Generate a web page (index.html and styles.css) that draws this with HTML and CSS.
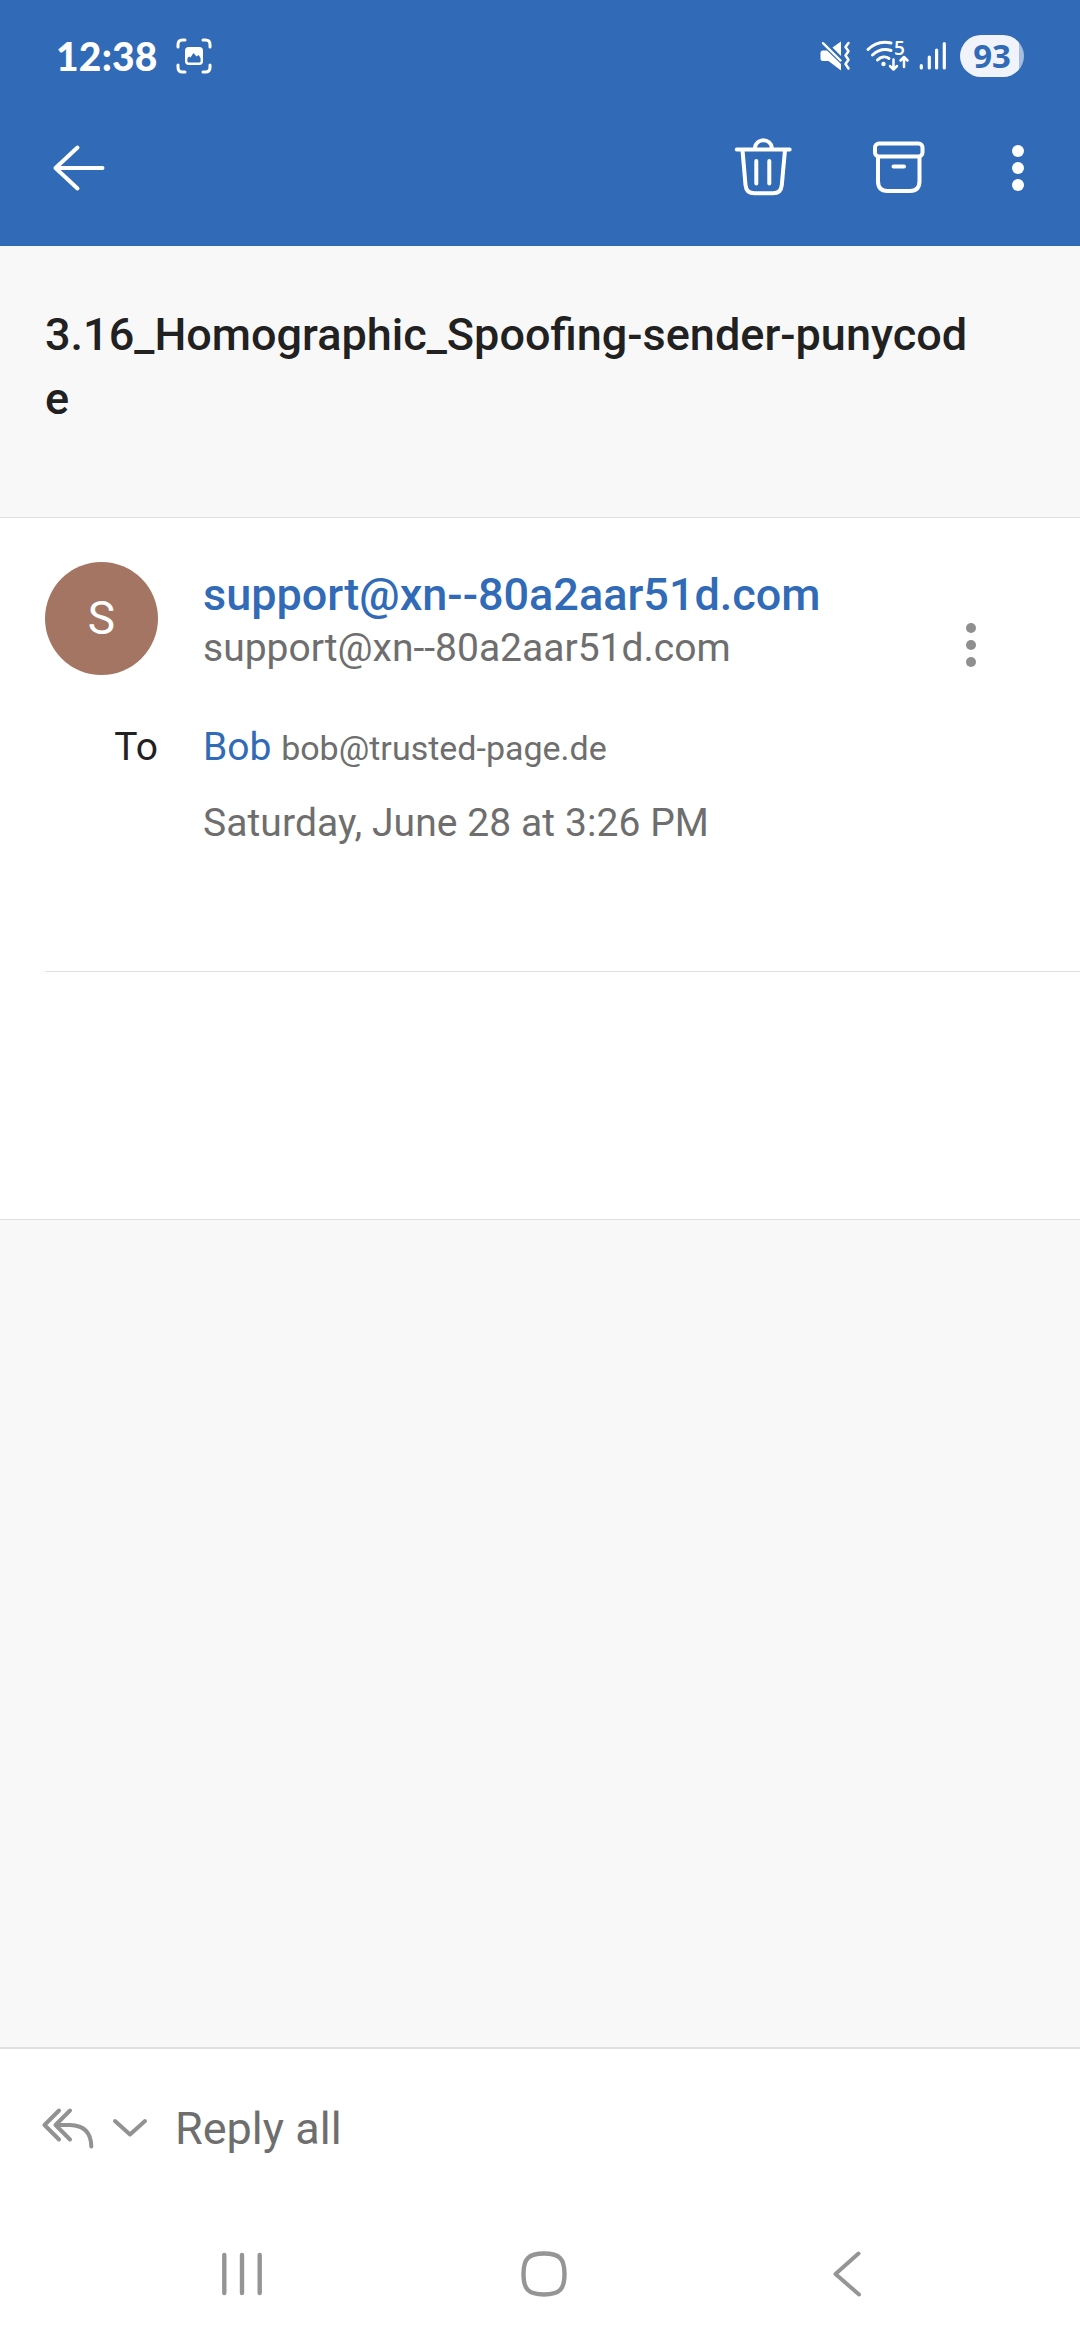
FILE: index.html
```html
<!DOCTYPE html>
<html lang="en">
<head>
<meta charset="utf-8">
<title>Message</title>
<link rel="stylesheet" href="styles.css">
</head>
<body>
<div class="screen">
  <header class="top">
    <div class="status">
      <span class="clock">12:38</span>
      <svg class="shot" width="36" height="36" viewBox="0 0 36 36" fill="none" stroke="#fff" stroke-width="3" stroke-linecap="round">
        <path d="M2 9V6.500Q2 2 6.500 2H9M27 2h2.500Q34 2 34 6.500V9M34 27v2.500Q34 34 29.500 34H27M9 34H6.500Q2 34 2 29.500V27"/>
        <rect x="10.200" y="10.200" width="15.600" height="15.600" rx="2.500" stroke-width="2.400"/>
        <path d="M11 10.500h14v10l-2.500-3.500-2 1.500-3-3.500-3 4.500-1.500-1-2 2z" fill="#fff" stroke="none"/>
      </svg>
      <span class="fill"></span>
      <svg class="mute" width="31" height="31" viewBox="0 0 31 31" fill="#fff">
        <path d="M3 9.500h4L21 23v6.500L8.500 20H3Q.500 20 .500 17.500V12Q.500 9.500 3 9.500zM12.500 6.500L21 .500V15z"/>
        <path d="M3 2.200L20.500 19.500" stroke="#fff" stroke-width="2.400" stroke-linecap="round"/>
        <path d="M28.500 2l-3 4 3 4.200-3 4.300 3 4.200-3 4.300 3 4.500" fill="none" stroke="#fff" stroke-width="2.500" stroke-linecap="round" stroke-linejoin="round"/>
      </svg>
      <svg class="wifi" width="44" height="32" viewBox="0 0 44 32" fill="none" stroke="#fff" stroke-width="3" stroke-linecap="round">
        <path d="M2 9.500C8 3.500 16 .800 25 3M6.500 15C12 10 18.500 8.300 25 10.500M11.500 20C15 16.500 19.500 16 23 18.500"/>
        <circle cx="17.500" cy="24" r="2.200" fill="#fff" stroke="none"/>
        <path d="M27.500 19.500v9.500M24 26l3.500 3.500L31 26M38 27v-9M34.500 20.500L38 17l3.500 3.500" stroke-width="2.500" stroke-linejoin="round"/>
        <text class="five" x="28" y="14.500">5</text>
      </svg>
      <svg class="bars" width="28" height="30" viewBox="0 0 28 30" stroke="#fff" stroke-width="3.200" stroke-linecap="round">
        <path d="M2.300 24.500V27M10.300 16v11M17.600 9v18M25.300 2.600V27"/>
      </svg>
      <span class="battery">93</span>
    </div>
    <div class="actions">
      <svg width="54" height="54" viewBox="0 0 54 54" fill="none" stroke="#fff" stroke-width="4" stroke-linecap="round" stroke-linejoin="round">
        <path d="M4.500 27H51.500M26.500 6.500L4.500 27 26.500 47.500"/>
      </svg>
      <span class="fill"></span>
      <svg class="trash" width="58" height="60" viewBox="0 0 58 60" fill="none" stroke="#fff" stroke-width="4" stroke-linecap="round">
        <path d="M2.700 13.500h53M21 13v-1.500a8.500 8.500 0 0 1 16.800 0V13M8.500 14l3 35Q12.300 57.300 20.500 57.300H39Q47 57.300 47.800 49L51 14M22.300 25v22.500M35.300 25v22.500"/>
      </svg>
      <svg class="archive" width="54" height="54" viewBox="0 0 54 54" fill="none" stroke="#fff" stroke-width="4" stroke-linecap="round">
        <rect x="3" y="3.500" width="47.500" height="13" rx="4"/>
        <path d="M6 17v24q0 10 9.500 10H38q9.500 0 9.500-10V17M21.500 26.500h10.500"/>
      </svg>
      <svg class="more" width="14" height="48" viewBox="0 0 14 48" fill="#fff">
        <circle cx="7" cy="7" r="6"/><circle cx="7" cy="24" r="6"/><circle cx="7" cy="41" r="6"/>
      </svg>
    </div>
  </header>

  <h1 class="subject">3.16_Homographic_Spoofing-sender-punycode</h1>

  <main class="message">
    <div class="avatar">S</div>
    <div class="sender">
      <div class="name">support@xn--80a2aar51d.com</div>
      <div class="address">support@xn--80a2aar51d.com</div>
    </div>
    <svg class="options" width="14" height="48" viewBox="0 0 14 48" fill="#8f8f8f">
      <circle cx="7" cy="7" r="5"/><circle cx="7" cy="24" r="5"/><circle cx="7" cy="41" r="5"/>
    </svg>
    <div class="label">To</div>
    <div class="recipient"><span class="bob">Bob</span> <span class="mail">bob@trusted-page.de</span></div>
    <div class="date">Saturday, June 28 at 3:26 PM</div>
  </main>
  <section class="content"></section>
  <div class="blank"></div>

  <footer class="bottom">
    <div class="reply">
      <svg class="replyicon" width="54" height="42" viewBox="0 0 54 42" fill="none" stroke="#929292" stroke-width="4" stroke-linecap="round" stroke-linejoin="round">
        <path d="M18 3.500L3.500 18 18 32.500M29 3.500L14.500 18 29 32.500M14.500 18H29Q50 18.500 50.300 39.500"/>
      </svg>
      <svg class="chevron" width="36" height="20" viewBox="0 0 36 20" fill="none" stroke="#929292" stroke-width="4" stroke-linecap="round" stroke-linejoin="round">
        <path d="M3 3l15 13.500L33 3"/>
      </svg>
      <span>Reply all</span>
    </div>
    <nav class="nav">
      <svg width="42" height="46" viewBox="0 0 42 46" stroke="#959595" stroke-width="4.400" stroke-linecap="round">
        <path d="M3.300 4v38M21 4v38M38.700 4v38"/>
      </svg>
      <svg class="home" width="46" height="46" viewBox="0 0 46 46" fill="none" stroke="#959595" stroke-width="4.400">
        <path d="M23 2.500C38.500 2.500 43.500 7.500 43.500 23S38.500 43.500 23 43.500 2.500 38.500 2.500 23 7.500 2.500 23 2.500z"/>
      </svg>
      <svg width="30" height="46" viewBox="0 0 30 46" fill="none" stroke="#959595" stroke-width="4" stroke-linecap="round" stroke-linejoin="round">
        <path d="M26.500 2.500L3.500 23 27 43.500"/>
      </svg>
    </nav>
  </footer>
</div>
</body>
</html>
```
FILE: styles.css
```css
* { box-sizing: border-box; }
body { margin: 0; font-family: Roboto, sans-serif; color: #212121; }
svg { display: block; flex: none; overflow: visible; }
.screen { width: 1080px; height: 2340px; display: flex; flex-direction: column; background: #f8f8f8; }
.fill { flex: 1; }

.top { height: 246px; flex: none; background: #316ab6; color: #fff; }
.status { height: 112px; display: flex; align-items: center; padding: 0 56px; }
.clock { font: 900 39px/46px Lato, sans-serif; width: 120px; letter-spacing: 0.2px; white-space: nowrap; }
.mute { margin-right: 15px; }
.wifi { margin-right: 9px; }
.five { font: 600 19px "Open Sans", sans-serif; fill: #fff; stroke: none; }
.bars { margin-right: 13px; }
.battery { width: 64px; height: 42px; border-radius: 21px; background: linear-gradient(90deg, #f0f3fa 59px, #a5bde0 59px); color: #316ab6; font: 700 33px/42px "Open Sans", sans-serif; text-align: center; }
.actions { height: 112px; display: flex; align-items: center; padding: 0 55px 0 51px; }
.trash { margin: 0 80px 4px 0; }
.archive { margin: 0 85px 2px 0; }

.subject { margin: 0; height: 271px; flex: none; padding: 57px 100px 0 45px; font-size: 45px; font-weight: 500; line-height: 64px; word-break: break-all; }

.message { background: #fff; border-top: 1px solid #e0e0e0; height: 454px; flex: none; padding: 44px 102px 0 45px; display: grid; grid-template-columns: 113px 1fr 14px; grid-template-rows: 148px 76px 76px; column-gap: 45px; }
.avatar { width: 113px; height: 113px; border-radius: 50%; background: #a47562; color: #fff; font-size: 46px; line-height: 113px; text-align: center; }
.sender { padding-top: 6px; }
.name { font-size: 45px; font-weight: 500; line-height: 54px; color: #316ab6; }
.address { font-size: 39px; line-height: 53px; color: #6e6e6e; }
.options { margin-top: 59px; }
.label { font-size: 39px; line-height: 75px; text-align: right; }
.recipient { grid-column: 2 / 4; font-size: 39px; line-height: 75px; color: #6e6e6e; }
.bob { color: #316ab6; }
.mail { font-size: 34px; }
.date { grid-column: 2 / 4; font-size: 39px; line-height: 75px; letter-spacing: 0.08px; color: #6e6e6e; }
.content { height: 249px; flex: none; background: linear-gradient(#e0e0e0, #e0e0e0) 45px 0 / 100% 1px no-repeat #fff; border-bottom: 1px solid #e0e0e0; }
.blank { flex: 1; }

.bottom { height: 293px; flex: none; border-top: 2px solid #e0e0e0; background: #fff; }
.reply { height: 158px; display: flex; align-items: center; padding-left: 41px; font-size: 45px; color: #6e6e6e; }
.replyicon { margin-right: 17px; }
.chevron { margin-right: 27px; }
.nav { height: 134px; display: flex; align-items: center; padding-left: 221px; }
.home { margin: 0 265px 0 258px; }
```
